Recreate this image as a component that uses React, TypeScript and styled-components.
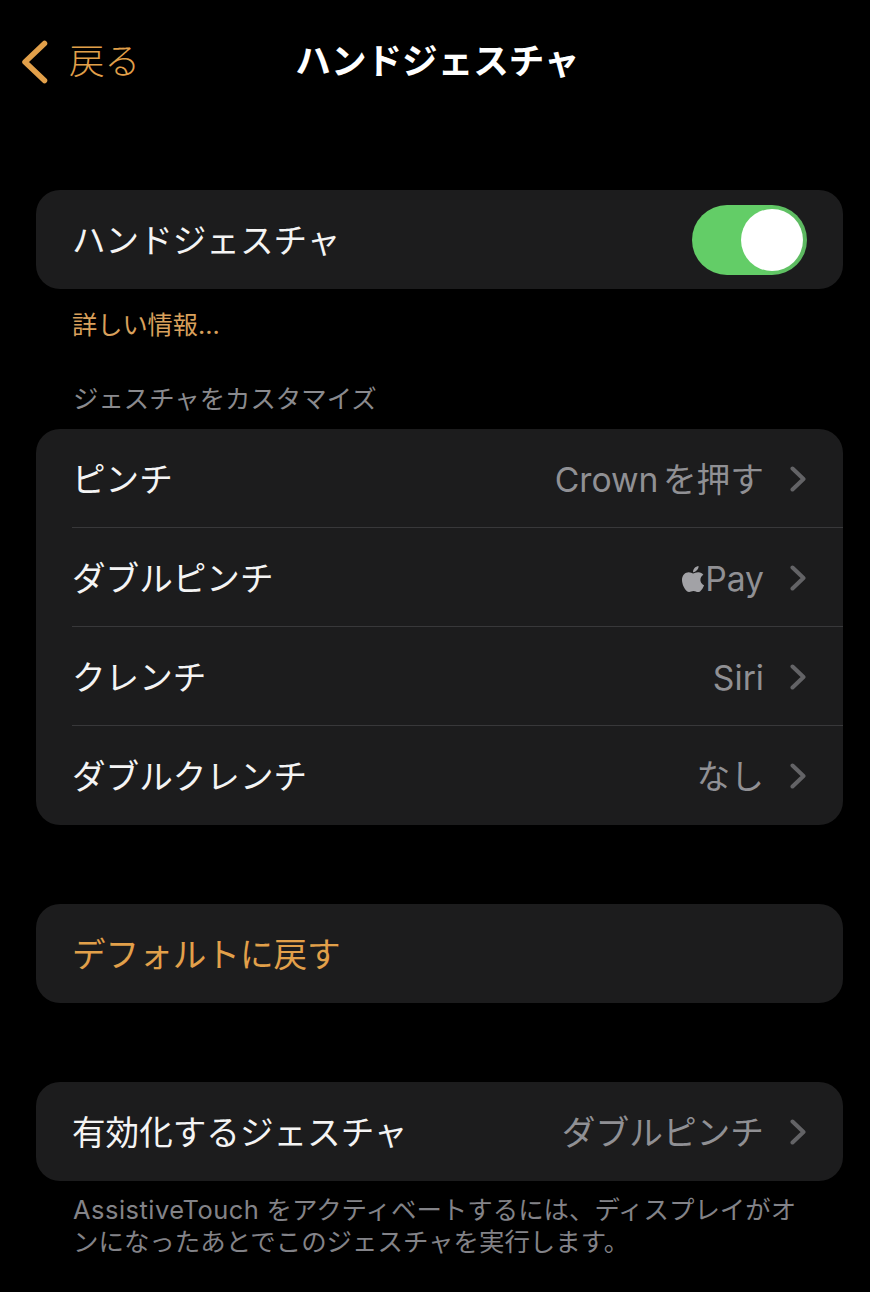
import React from "react";
import styled, { createGlobalStyle } from "styled-components";
import { FaApple } from "react-icons/fa";

const GlobalStyle = createGlobalStyle`
  html, body { margin: 0; padding: 0; background: #000; }
  body { font-family: "Inter", "Noto Sans CJK JP", sans-serif; }
`;

const Page = styled.div`
  width: 870px;
  height: 1292px;
  background: #000;
  overflow: hidden;
  display: flex;
  flex-direction: column;
  padding: 0 27px 0 36px;
  box-sizing: border-box;
`;

const NavBar = styled.header`
  position: relative;
  height: 122px;
  margin: 0 -27px 68px -36px;
  display: flex;
  align-items: center;
  justify-content: center;
`;

const Back = styled.div`
  position: absolute;
  left: 21px;
  top: 40px;
  display: flex;
  align-items: center;
  gap: 21px;
  color: #e2a04a;
  font-size: 35.5px;
  line-height: 42px;
  font-weight: 300;
`;

const Title = styled.h1`
  margin: 2px 0 0 5px;
  color: #fff;
  font-size: 35.6px;
  line-height: 42px;
  font-weight: 700;
`;

const Card = styled.section`
  background: #1c1c1d;
  border-radius: 24px;
  overflow: hidden;
`;

const Row = styled.div<{ $divider?: boolean }>`
  position: relative;
  height: 99px;
  box-sizing: border-box;
  display: flex;
  align-items: center;
  justify-content: space-between;
  padding: 0 37px 0 36px;
  &::after {
    content: "";
    display: ${(p) => (p.$divider ? "block" : "none")};
    position: absolute;
    left: 36px;
    right: 0;
    bottom: 0;
    height: 1px;
    background: #38383a;
  }
`;

const RowLabel = styled.span<{ $accent?: boolean }>`
  color: ${(p) => (p.$accent ? "#e2a04a" : "#f4f4f4")};
  font-size: 33.6px;
  line-height: 42px;
  padding-top: 2px;
`;

const RowRight = styled.span`
  display: flex;
  align-items: center;
  gap: 26px;
`;

const RowValue = styled.span`
  display: flex;
  align-items: center;
  color: #909094;
  font-size: 33.7px;
  line-height: 42px;
  word-spacing: -5px;
  padding-top: 2px;
`;

const Switch = styled.div`
  width: 115px;
  height: 70px;
  border-radius: 35px;
  background: linear-gradient(90deg, #63cd67 60%, #5cb660 100%);
  position: relative;
  margin-right: -1px;
`;

const Knob = styled.div`
  position: absolute;
  right: 4px;
  top: 4px;
  width: 62px;
  height: 62px;
  border-radius: 50%;
  background: #fff;
`;

const LinkNote = styled.div`
  color: #d9a05c;
  font-size: 25.2px;
  line-height: 32px;
  margin: 20px 0 0 36px;
`;

const SectionLabel = styled.div`
  color: #8a8a8e;
  font-size: 25.4px;
  line-height: 32px;
  margin: 42px 0 14px 37px;
`;

const Spacer = styled.div<{ $h: number }>`
  height: ${(p) => p.$h}px;
`;

const Footer = styled.div`
  color: #838388;
  font-size: 25.45px;
  line-height: 32px;
  margin: 13px 0 0 37px;
`;

const FooterLine = styled.div`
  white-space: nowrap;
`;

const LatinWord = styled.span`
  letter-spacing: 0.5px;
`;

const ApplePay = styled.span`
  display: inline-flex;
  align-items: center;
  svg { width: 26px; height: 30px; margin-right: -1px; color: #a2a2a6; }
`;

const Chevron = () => (
  <svg width="16" height="26" viewBox="0 0 16 26" fill="none" aria-hidden="true">
    <path d="M2.5 2.5 L13.5 13 L2.5 23.5" stroke="#636366" strokeWidth="4" strokeLinecap="round" strokeLinejoin="round" />
  </svg>
);

const BackChevron = () => (
  <svg width="27" height="44" viewBox="0 0 27 44" fill="none" aria-hidden="true">
    <path d="M23.5 3.5 L4 22 L23.5 40.5" stroke="#e2a04a" strokeWidth="5.5" strokeLinecap="round" strokeLinejoin="round" />
  </svg>
);

const gestures: { label: string; value: React.ReactNode }[] = [
  { label: "ピンチ", value: "Crown を押す" },
  { label: "ダブルピンチ", value: <ApplePay><FaApple />Pay</ApplePay> },
  { label: "クレンチ", value: "Siri" },
  { label: "ダブルクレンチ", value: "なし" },
];

export default function App() {
  return (
    <Page lang="ja">
      <GlobalStyle />
      <NavBar>
        <Back><BackChevron />戻る</Back>
        <Title>ハンドジェスチャ</Title>
      </NavBar>
      <Card>
        <Row>
          <RowLabel>ハンドジェスチャ</RowLabel>
          <Switch><Knob /></Switch>
        </Row>
      </Card>
      <LinkNote>詳しい情報...</LinkNote>
      <SectionLabel>ジェスチャをカスタマイズ</SectionLabel>
      <Card>
        {gestures.map((g, i) => (
          <Row key={g.label} $divider={i < gestures.length - 1}>
            <RowLabel>{g.label}</RowLabel>
            <RowRight>
              <RowValue>{g.value}</RowValue>
              <Chevron />
            </RowRight>
          </Row>
        ))}
      </Card>
      <Spacer $h={79} />
      <Card>
        <Row><RowLabel $accent>デフォルトに戻す</RowLabel></Row>
      </Card>
      <Spacer $h={79} />
      <Card>
        <Row>
          <RowLabel>有効化するジェスチャ</RowLabel>
          <RowRight>
            <RowValue>ダブルピンチ</RowValue>
            <Chevron />
          </RowRight>
        </Row>
      </Card>
      <Footer>
        <FooterLine><LatinWord>AssistiveTouch</LatinWord> をアクティベートするには、ディスプレイがオ</FooterLine>
        <FooterLine>ンになったあとでこのジェスチャを実行します。</FooterLine>
      </Footer>
    </Page>
  );
}
